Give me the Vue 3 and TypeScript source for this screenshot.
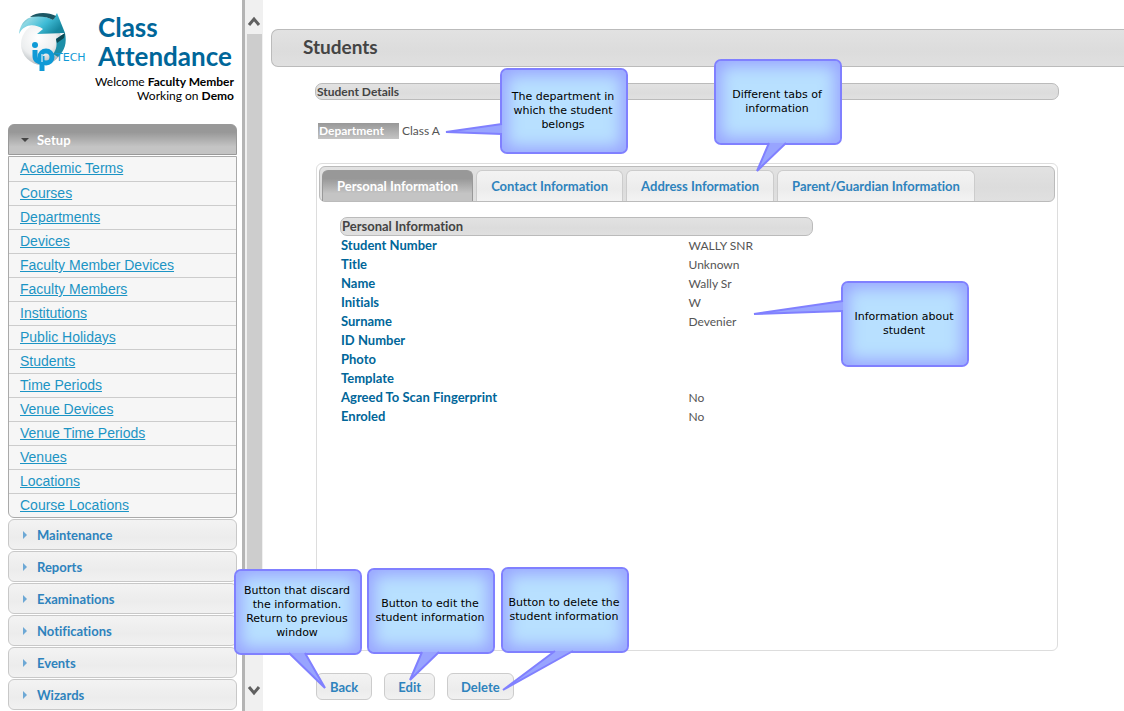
<script setup lang="ts">
import { ref } from 'vue'

interface Callout {
  text: string
  x: number
  y: number
  tail: string
}

const links: string[] = [
  'Academic Terms', 'Courses', 'Departments', 'Devices', 'Faculty Member Devices',
  'Faculty Members', 'Institutions', 'Public Holidays', 'Students', 'Time Periods',
  'Venue Devices', 'Venue Time Periods', 'Venues', 'Locations', 'Course Locations',
]
const sections: string[] = ['Maintenance', 'Reports', 'Examinations', 'Notifications', 'Events', 'Wizards']
const tabs: string[] = ['Personal Information', 'Contact Information', 'Address Information', 'Parent/Guardian Information']
const activeTab = ref<string>(tabs[0])
const actions: string[] = ['Back', 'Edit', 'Delete']

const fields: [string, string][] = [
  ['Student Number', 'WALLY SNR'],
  ['Title', 'Unknown'],
  ['Name', 'Wally Sr'],
  ['Initials', 'W'],
  ['Surname', 'Devenier'],
  ['ID Number', ''],
  ['Photo', ''],
  ['Template', ''],
  ['Agreed To Scan Fingerprint', 'No'],
  ['Enroled', 'No'],
]

/* Tail points are relative to the callout's top left corner: base, tip, base. */
const callouts: Callout[] = [
  { text: 'The department in\nwhich the student\nbelongs', x: 500, y: 68, tail: '2,56 -54,64 2,66' },
  { text: 'Different tabs of\ninformation', x: 714, y: 59, tail: '55,84 43,112 72,84' },
  { text: 'Information about\nstudent', x: 841, y: 281, tail: '2,20 -87,33 2,30' },
  { text: 'Button that discard\nthe information.\nReturn to previous\nwindow', x: 234, y: 569, tail: '55,84 91,119 71,84' },
  { text: 'Button to edit the\nstudent information', x: 367, y: 568, tail: '55,84 43,112 72,84' },
  { text: 'Button to delete the\nstudent information', x: 501, y: 567, tail: '54,84 2,123 72,84' },
]
</script>

<template>
  <div class="page">
    <aside class="sidebar">
      <header class="brand">
        <svg class="logo" viewBox="0 0 72 62" aria-label="ip tech">
          <defs>
            <radialGradient id="ball" cx="0.4" cy="0.35" r="0.7">
              <stop offset="0" stop-color="#ffffff" />
              <stop offset="0.6" stop-color="#eceeef" />
              <stop offset="1" stop-color="#a9afb3" />
            </radialGradient>
            <linearGradient id="arrow" x1="0" y1="0" x2="1" y2="0.5">
              <stop offset="0" stop-color="#0d5a68" />
              <stop offset="0.3" stop-color="#8fd8e4" />
              <stop offset="0.65" stop-color="#3fbcd6" />
              <stop offset="1" stop-color="#16869e" />
            </linearGradient>
          </defs>
          <circle cx="24" cy="32" r="21" fill="url(#ball)" />
          <path d="M1 22 C2 10 10 4 20 4 C26 4 31 6 35 8 L39 1 L47 21 L19 22 L25 17 C16 11 6 12 1 22 Z" fill="url(#arrow)" />
          <path d="M12 5 C18 0 30 0 38 4 L35 8 C29 4 20 4 12 5 Z" fill="#1b5663" />
          <path d="M38 27 L47 21 C49 31 47 38 40 45 L35 42 C39 37 39 32 38 27 Z" fill="#1d8fa8" />
          <path d="M38 27 L47 21 L46 26 L39 31 Z" fill="#0d4853" />
          <circle cx="17" cy="33" r="3" fill="#0f9ad6" />
          <path d="M17 38 V44 C17 48 20 50 24 50" fill="none" stroke="#0f9ad6" stroke-width="5" />
          <circle cx="28" cy="45" r="6" fill="none" stroke="#0f9ad6" stroke-width="5" />
          <path d="M24 44 V59" stroke="#0f9ad6" stroke-width="5" />
          <path d="M24 42 V50" stroke="#fff" stroke-width="1" />
          <text x="38" y="49" class="logo-text">TECH</text>
        </svg>
        <div class="brand-text">
          <h1>Class Attendance</h1>
          <p>Welcome <strong>Faculty Member</strong></p>
          <p>Working on <strong>Demo</strong></p>
        </div>
      </header>

      <nav class="accordion">
        <button class="section open" type="button">
          <svg viewBox="0 0 8 8"><path d="M0 2 H8 L4 6 Z" fill="#454545" /></svg>Setup
        </button>
        <ul>
          <li v-for="link in links" :key="link"><a href="#">{{ link }}</a></li>
        </ul>
        <button v-for="s in sections" :key="s" class="section" type="button">
          <svg viewBox="0 0 8 8"><path d="M2 0 V8 L6 4 Z" fill="#6da8d5" /></svg>{{ s }}
        </button>
      </nav>
    </aside>

    <div class="scrollbar">
      <svg viewBox="0 0 17 34"><path d="M4 25 L9 19 L14 25" /></svg>
      <div class="thumb"></div>
      <svg class="down" viewBox="0 0 17 34"><path d="M4 10 L9 16 L14 10" /></svg>
    </div>

    <main>
      <h2 class="page-title">Students</h2>
      <div class="content">
        <h3 class="bar">Student Details</h3>
        <dl class="department">
          <dt>Department</dt>
          <dd>Class A</dd>
        </dl>

        <section class="tabs">
          <div class="tab-list" role="tablist">
            <button
              v-for="t in tabs" :key="t" type="button" role="tab"
              :aria-selected="t === activeTab" :class="{ active: t === activeTab }"
              @click="activeTab = t"
            >{{ t }}</button>
          </div>
          <div class="panel" role="tabpanel">
            <h3 class="bar inner">Personal Information</h3>
            <table>
              <tbody>
                <tr v-for="[label, value] in fields" :key="label">
                  <th scope="row">{{ label }}</th>
                  <td>{{ value }}</td>
                </tr>
              </tbody>
            </table>
          </div>
        </section>

        <div class="actions">
          <button v-for="a in actions" :key="a" type="button">{{ a }}</button>
        </div>
      </div>
    </main>

    <div v-for="c in callouts" :key="c.text" class="callout" :style="{ left: c.x + 'px', top: c.y + 'px' }">
      <svg>
        <polygon :points="c.tail" fill="#98a4ff" />
        <polyline :points="c.tail" fill="none" stroke="#8080ff" stroke-width="2" />
      </svg>
      <span>{{ c.text }}</span>
    </div>
  </div>
</template>

<style>
body {
  margin: 0;
  background: #fff;
}
</style>

<style scoped>
* {
  box-sizing: border-box;
}
.page {
  position: relative;
  display: flex;
  height: 100vh;
  overflow: hidden;
  font-family: Lato, "Open Sans", sans-serif;
  font-variant-ligatures: none;
  color: #555;
}
h1, h2, h3, p, ul, dl, dd {
  margin: 0;
  padding: 0;
}
button {
  font-family: inherit;
  font-variant-ligatures: none;
  cursor: pointer;
}

.sidebar {
  flex: 0 0 242px;
  min-width: 0;
  padding: 12px 5px 0 8px;
}
.brand {
  display: grid;
  grid-template-columns: 80px 1fr;
  align-content: start;
  height: 112px;
  padding: 0 3px 0 10px;
  color: #000;
  font-size: 12px;
  line-height: 14px;
}
.logo {
  width: 72px;
  height: 62px;
}
.logo-text {
  font: 11px "DejaVu Sans", sans-serif;
  fill: #0f9ad6;
}
.brand-text {
  display: flex;
  flex-direction: column;
  align-items: flex-end;
  min-width: 0;
}
.brand-text h1 {
  align-self: stretch;
  margin: 1px 0 4px;
  color: #069;
  font-size: 26px;
  font-weight: 700;
  line-height: 29px;
}
.brand-text p {
  white-space: nowrap;
}
.brand-text strong {
  font-weight: 700;
}

.accordion {
  display: flex;
  flex-direction: column;
  gap: 1px;
}
.section {
  display: flex;
  flex: none;
  align-items: center;
  gap: 8px;
  height: 31px;
  padding: 0 12px;
  border: 1px solid #c8c8c8;
  border-radius: 6px;
  background: linear-gradient(#f3f3f3, #ececec 60%, #f1f1f1);
  color: #2e83bd;
  font-size: 13px;
  font-weight: 700;
}
.section svg {
  width: 8px;
  height: 8px;
}
.section.open {
  border-color: #999;
  border-radius: 6px 6px 0 0;
  background: linear-gradient(#989898 25%, #c4c4c4 75%);
  color: #fff;
}
.accordion ul {
  border: 1px solid #aaa;
  border-radius: 0 0 6px 6px;
  background: #f6f6f6;
  list-style: none;
}
.accordion li {
  height: 24px;
  padding-left: 11px;
  font: 14px/23px "Liberation Sans", sans-serif;
}
.accordion li + li {
  border-top: 1px solid #ccc;
}
.accordion a {
  color: #1c94c4;
}

.scrollbar {
  display: flex;
  flex: 0 0 21px;
  flex-direction: column;
  border-left: 3px solid #b4b4b4;
  background: #f0f0f0;
}
.scrollbar svg {
  width: 17px;
  height: 34px;
  fill: none;
  stroke: #606060;
  stroke-width: 3;
}
.thumb {
  flex: 1;
  width: 15px;
  margin: 0 0 47px 2px;
  background: #cdcdcd;
}
.scrollbar .down {
  margin-top: -22px;
}

main {
  flex: 1;
  min-width: 0;
  padding: 29px 0 0 8px;
}
.page-title {
  height: 38px;
  padding-left: 31px;
  border: 1px solid #bbb;
  border-right: 0;
  border-radius: 7px 0 0 7px;
  background: linear-gradient(#e2e2e2, #dcdcdc 60%, #e0e0e0);
  color: #444;
  font-size: 19px;
  font-weight: 700;
  line-height: 34px;
}
.content {
  padding: 16px 65px 0 44px;
}
.bar {
  height: 17px;
  padding-left: 1px;
  border: 1px solid #bbb;
  border-radius: 7px;
  background: linear-gradient(#e2e2e2, #dcdcdc 60%, #e0e0e0);
  color: #444;
  font-size: 12px;
  font-weight: 700;
  line-height: 15px;
}
.department {
  display: flex;
  gap: 3px;
  margin: 23px 3px 24px;
  font-size: 12px;
  line-height: 16px;
}
.department dt {
  width: 81px;
  padding-left: 1px;
  background: linear-gradient(#989898, #c4c4c4);
  color: #fff;
  font-weight: 700;
}

.tabs {
  min-height: 488px;
  margin: 0 1px;
  padding: 2px;
  border: 1px solid #ddd;
  border-radius: 6px;
}
.tab-list {
  display: flex;
  align-items: flex-end;
  gap: 3px;
  height: 36px;
  padding-left: 2px;
  border: 1px solid #bbb;
  border-radius: 6px;
  background: linear-gradient(#e2e2e2, #dcdcdc 60%, #e0e0e0);
}
.tab-list button {
  height: 31px;
  padding: 0 14px;
  border: 1px solid #ccc;
  border-bottom: 0;
  border-radius: 6px 6px 0 0;
  background: linear-gradient(#f3f3f3, #ececec 60%, #f3f3f3);
  color: #2e83bd;
  font-size: 13px;
  font-weight: 700;
}
.tab-list .active {
  border-color: #999;
  background: linear-gradient(#989898 25%, #c4c4c4 75%);
  color: #fff;
}
.panel {
  padding: 15px 20px 15px 21px;
}
.bar.inner {
  width: 68%;
  height: 19px;
  font-size: 13px;
  line-height: 17px;
}
table {
  width: 100%;
  border-collapse: collapse;
}
th, td {
  height: 19px;
  padding: 0 1px;
  text-align: left;
}
th {
  width: 50%;
  color: #069;
  font-size: 13px;
  font-weight: 700;
  line-height: 19px;
}
td {
  font-size: 12px;
  line-height: 17px;
}

.actions {
  display: flex;
  gap: 12px;
  margin: 22px 1px 0;
}
.actions button {
  height: 27px;
  padding: 0 13px;
  border: 1px solid #ccc;
  border-radius: 6px;
  background: linear-gradient(#f3f3f3, #ececec 60%, #f1f1f1);
  color: #2e83bd;
  font-size: 13px;
  font-weight: 700;
}

.callout {
  position: absolute;
  display: flex;
  align-items: center;
  justify-content: center;
  width: 128px;
  height: 86px;
  padding-right: 2px;
  border: 2px solid #8080ff;
  border-radius: 7px;
  background: #b8e0ff;
  box-shadow: inset 0 0 16px 5px #98a4ff;
  color: #000;
  font: 11px/14px "DejaVu Sans", sans-serif;
  text-align: center;
  white-space: pre;
}
.callout svg {
  position: absolute;
  top: -2px;
  left: -2px;
  width: 128px;
  height: 86px;
  overflow: visible;
}
.callout span {
  position: relative;
}
</style>
